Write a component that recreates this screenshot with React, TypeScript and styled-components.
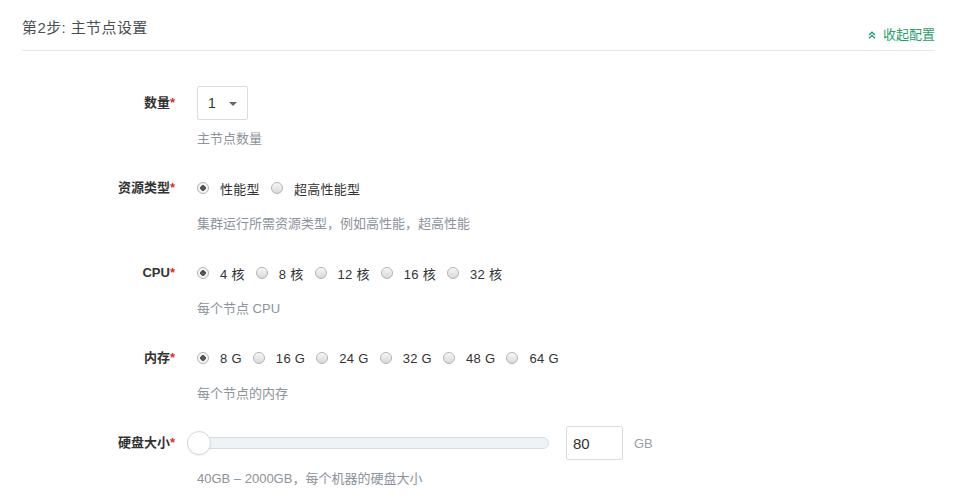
import React from "react";
import styled, { createGlobalStyle } from "styled-components";

const Global = createGlobalStyle`
  html, body { margin: 0; padding: 0; background: #fff; }
  body {
    font-family: "Liberation Sans", "Noto Sans CJK SC", sans-serif;
    color: #333;
    -webkit-font-smoothing: antialiased;
  }
  * { box-sizing: border-box; }
`;

const Page = styled.div`
  padding: 0 28px 0 22px;
  width: 963px;
`;

const Header = styled.div`
  height: 51px;
  border-bottom: 1px solid #e1e8ee;
  display: flex;
  justify-content: space-between;
  align-items: flex-start;
  padding-top: 18px;
`;

const Title = styled.div`
  font-size: 15px;
  line-height: 20px;
  letter-spacing: 0.4px;
  color: #4a4f55;
`;

const Collapse = styled.a`
  margin-top: 9px;
  display: flex;
  align-items: center;
  gap: 7px;
  font-size: 13px;
  line-height: 16px;
  color: #1fa06a;
  cursor: pointer;
`;

const Form = styled.div`
  margin-top: 35px;
  display: flex;
  flex-direction: column;
`;

const Row = styled.div`
  display: grid;
  grid-template-columns: 153px 1fr;
  column-gap: 22px;
  margin-bottom: 23px;
`;

const Label = styled.div`
  text-align: right;
  font-size: 13px;
  line-height: 34px;
  font-weight: 600;
  color: #333;
  white-space: nowrap;
`;

const Star = styled.span`
  color: #e02e24;
  font-weight: 600;
`;

const Field = styled.div`
  display: flex;
  flex-direction: column;
`;

const Line = styled.div`
  height: 34px;
  display: flex;
  align-items: center;
`;

const Help = styled.div`
  margin-top: 10px;
  font-size: 13px;
  line-height: 18px;
  color: #8c939b;
`;

const Select = styled.div`
  width: 51px;
  height: 34px;
  border: 1px solid #d6dde4;
  border-radius: 2px;
  display: flex;
  align-items: center;
  justify-content: space-between;
  padding: 0 10px 0 10px;
  font-size: 14px;
  color: #333;
`;

const Caret = styled.span`
  width: 0;
  height: 0;
  border-left: 4px solid transparent;
  border-right: 4px solid transparent;
  border-top: 4px solid #666;
  margin-top: 2px;
`;

const Option = styled.label`
  display: flex;
  align-items: center;
  margin-right: 11px;
  font-size: 13px;
  letter-spacing: 0.3px;
  color: #333;
  cursor: pointer;
`;

const RadioDot = styled.span<{ $checked?: boolean }>`
  width: 12px;
  height: 12px;
  border-radius: 50%;
  border: 1px solid #b3b3b3;
  background: ${(p) =>
    p.$checked
      ? "radial-gradient(circle, #555 0 2.6px, #f4f4f4 3px)"
      : "linear-gradient(#f6f6f6, #d9d9d9)"};
  box-shadow: inset 0 1px 1px rgba(255, 255, 255, 0.6);
  margin-right: 11px;
  flex: none;
`;

const SliderWrap = styled.div`
  position: relative;
  width: 362px;
  height: 24px;
  margin-left: -10px;
  display: flex;
  align-items: center;
`;

const Track = styled.div`
  width: 100%;
  height: 12px;
  border-radius: 6px;
  background: #eef3f8;
  border: 1px solid #d4dde6;
`;

const Thumb = styled.div`
  position: absolute;
  top: 0;
  width: 24px;
  height: 24px;
  border-radius: 50%;
  background: #fff;
  border: 1px solid #cfd8e1;
  box-shadow: 0 1px 2px rgba(0, 0, 0, 0.06);
`;

const NumInput = styled.input`
  margin-left: 17px;
  width: 57px;
  height: 34px;
  border: 1px solid #d6dde4;
  border-radius: 2px;
  padding: 0 6px;
  font-family: inherit;
  font-size: 15px;
  color: #333;
  outline: none;
`;

const Unit = styled.span`
  margin-left: 11px;
  font-size: 13px;
  color: #9aa1a8;
`;

const ChevronsUp = () => (
  <svg width="8" height="8" viewBox="0 0 8 8" fill="none" stroke="#1fa06a" strokeWidth="1.3">
    <path d="M1 4 L4 1.2 L7 4" />
    <path d="M1 7.3 L4 4.5 L7 7.3" />
  </svg>
);

type RadioGroupProps = { options: string[]; value: string };
const RadioGroup = ({ options, value }: RadioGroupProps) => (
  <Line>
    {options.map((o) => (
      <Option key={o}>
        <RadioDot $checked={o === value} />
        {o}
      </Option>
    ))}
  </Line>
);

const FormRow = ({ label, children, help }: { label: string; children: React.ReactNode; help: string }) => (
  <Row>
    <Label>
      {label}
      <Star>*</Star>
    </Label>
    <Field>
      {children}
      <Help>{help}</Help>
    </Field>
  </Row>
);

export default function App() {
  const min = 40;
  const max = 2000;
  const disk = 80;
  const trackPx = 338;
  const offset = Math.max(0, ((disk - min) / (max - min)) * trackPx - 7);
  return (
    <Page>
      <Global />
      <Header>
        <Title>第2步: 主节点设置</Title>
        <Collapse>
          <ChevronsUp />
          收起配置
        </Collapse>
      </Header>
      <Form>
        <FormRow label="数量" help="主节点数量">
          <Line>
            <Select>
              1<Caret />
            </Select>
          </Line>
        </FormRow>
        <FormRow label="资源类型" help="集群运行所需资源类型，例如高性能，超高性能">
          <RadioGroup options={["性能型", "超高性能型"]} value="性能型" />
        </FormRow>
        <FormRow label="CPU" help="每个节点 CPU">
          <RadioGroup options={["4 核", "8 核", "12 核", "16 核", "32 核"]} value="4 核" />
        </FormRow>
        <FormRow label="内存" help="每个节点的内存">
          <RadioGroup options={["8 G", "16 G", "24 G", "32 G", "48 G", "64 G"]} value="8 G" />
        </FormRow>
        <FormRow label="硬盘大小" help="40GB – 2000GB，每个机器的硬盘大小">
          <Line>
            <SliderWrap>
              <Track />
              <Thumb style={{ left: `${offset}px` }} />
            </SliderWrap>
            <NumInput defaultValue={disk} />
            <Unit>GB</Unit>
          </Line>
        </FormRow>
      </Form>
    </Page>
  );
}
